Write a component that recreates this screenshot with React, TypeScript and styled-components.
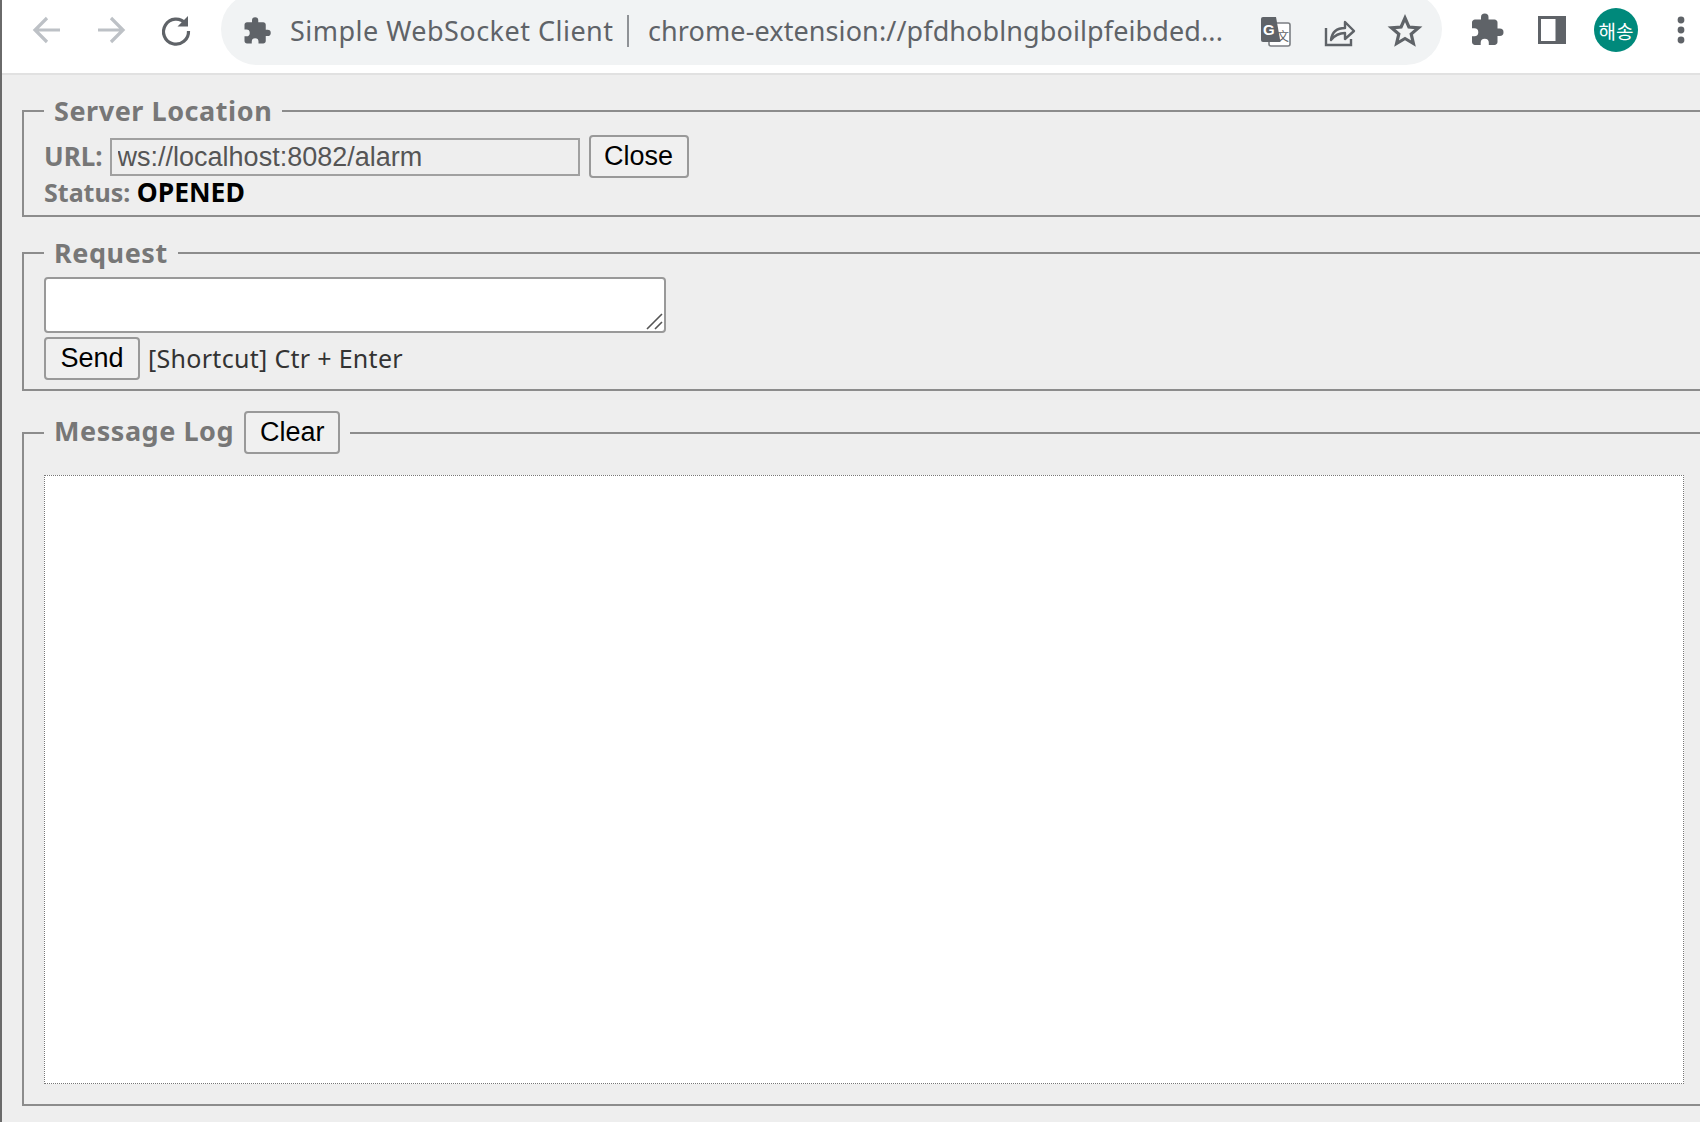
import React from "react";
import styled, { createGlobalStyle } from "styled-components";

const Global = createGlobalStyle`
  html, body { margin: 0; padding: 0; height: 100%; overflow: hidden; background: #eeeeee; }
`;

const Shell = styled.div`
  width: 1700px;
  height: 1122px;
  box-sizing: border-box;
  border-left: 2px solid #6a6a6a;
  overflow: hidden;
  display: flex;
  flex-direction: column;
  background: #eeeeee;
`;

const Toolbar = styled.header`
  height: 75px;
  flex: none;
  box-sizing: border-box;
  background: #fff;
  border-bottom: 2px solid #e1e1e1;
  display: flex;
  align-items: flex-start;
`;

const NavGroup = styled.div`
  width: 219px;
  height: 60px;
  flex: none;
  display: flex;
  align-items: center;
  padding-left: 27px;
  box-sizing: border-box;
  gap: 28px;
`;

const Icon = styled.svg`
  width: 36px;
  height: 36px;
  flex: none;
  display: block;
`;

const ReloadIcon = styled(Icon)`
  margin-left: 1px;
`;

const Omnibox = styled.div`
  width: 1221px;
  height: 72px;
  margin-top: -7px;
  padding-top: 3px;
  flex: none;
  box-sizing: border-box;
  background: #f1f3f4;
  border-radius: 36px;
  display: flex;
  align-items: center;
  padding-left: 21px;
  color: #5f6368;
  font-family: "Noto Sans", sans-serif;
  font-size: 27px;
`;

const Title = styled.span`
  margin-left: 18px;
  width: 323px;
  letter-spacing: 0.48px;
  white-space: nowrap;
  flex: none;
`;

const Sep = styled.span`
  width: 2px;
  height: 32px;
  margin-left: 14px;
  background: #8f9296;
  flex: none;
`;

const Url = styled.span`
  margin-left: 19px;
  width: 590px;
  letter-spacing: 0.1px;
  white-space: nowrap;
  flex: none;
`;

const BoxActions = styled.div`
  display: flex;
  gap: 29px;
  margin-left: 19px;
  flex: none;
`;

const RightActions = styled.div`
  height: 60px;
  display: flex;
  align-items: center;
  margin-left: 27px;
  gap: 29px;
`;

const Avatar = styled.div`
  width: 44px;
  height: 44px;
  margin: 0 -4px 0 -5px;
  flex: none;
  border-radius: 50%;
  background: #00897b;
  color: #fff;
  font-family: "Noto Sans CJK KR", sans-serif;
  font-size: 19px;
  display: flex;
  align-items: center;
  justify-content: center;
`;

const Content = styled.main`
  flex: 1;
  min-height: 0;
  padding: 18px 0 0 20px;
  display: flex;
  flex-direction: column;
`;

const Group = styled.fieldset<{ $h: number; $gap?: number }>`
  width: 1684px;
  height: ${(p) => p.$h}px;
  flex: none;
  box-sizing: border-box;
  margin: ${(p) => p.$gap ?? 0}px 0 0;
  padding: 0 20px;
  border: 2px solid #8c8c8c;
  min-inline-size: 0;
`;

const Legend = styled.legend`
  padding: 0 10px;
  font-family: "Noto Sans", sans-serif;
  font-weight: 700;
  font-size: 27px;
  line-height: 36px;
  letter-spacing: 0.55px;
  color: #777;
  display: flex;
  align-items: center;
  gap: 10px;
`;

const LogTitle = styled.span`
  margin-top: -3px;
`;

const Row = styled.div<{ $top?: number }>`
  display: flex;
  align-items: center;
  margin-top: ${(p) => p.$top ?? 0}px;
`;

const Label = styled.label`
  font-family: "Noto Sans", sans-serif;
  font-weight: 700;
  font-size: 25px;
  line-height: 34px;
  color: #777;
`;

const UrlLabel = styled(Label)`
  font-size: 26px;
  margin-top: -1px;
`;

const StatusLine = styled.div`
  margin-top: -3px;
`;

const StatusValue = styled.span`
  color: #000;
  font-size: 26.5px;
`;

const UrlInput = styled.input`
  width: 470px;
  height: 38px;
  box-sizing: border-box;
  margin: 1px 9px 0 7px;
  padding: 0 6px;
  border: 2px solid #a0a0a0;
  background: #eeeeee;
  color: #555;
  font-family: "Liberation Sans", sans-serif;
  font-size: 27px;
`;

const Btn = styled.button<{ $w: number }>`
  height: 43px;
  box-sizing: border-box;
  padding: 0;
  border: 2px solid #999;
  border-radius: 4px;
  background: #f0f0f0;
  color: #000;
  font-family: "Liberation Sans", sans-serif;
  font-size: 27px;
  flex: none;
  width: ${(p) => p.$w}px;
`;

const AreaWrap = styled.div`
  position: relative;
  width: 622px;
  height: 56px;
  margin-top: 6px;
`;

const Area = styled.textarea`
  display: block;
  width: 100%;
  height: 100%;
  box-sizing: border-box;
  margin: 0;
  border: 2px solid #999;
  border-radius: 4px;
  background: #fff;
  resize: none;
  outline: none;
`;

const Grip = styled.svg`
  position: absolute;
  right: 3px;
  bottom: 3px;
  width: 18px;
  height: 18px;
`;

const Hint = styled.span`
  margin: -1px 0 0 8px;
  font-family: "Noto Sans", sans-serif;
  font-size: 25px;
  letter-spacing: 0.3px;
  color: #333;
`;

const Log = styled.div`
  width: 1640px;
  height: 609px;
  margin-top: 21px;
  box-sizing: border-box;
  border: 1px dotted #777;
  background: #fff;
`;

const Back = ({ flip }: { flip?: boolean }) => (
  <Icon viewBox="0 0 36 36" fill="none" stroke="#bdc1c6" strokeWidth="3.2">
    <g transform={flip ? "translate(36 0) scale(-1 1)" : undefined}>
      <path d="M31 18H7M18 6 6 18l12 12" />
    </g>
  </Icon>
);

const Puzzle = ({ $small }: { $small?: boolean }) => (
  <Icon viewBox="0 0 24 24" fill="#5f6368" style={$small ? { width: 30, height: 30 } : undefined}>
    <path d="M20.5 11H19V7c0-1.1-.9-2-2-2h-4V3.5a2.5 2.5 0 0 0-5 0V5H4c-1.1 0-2 .9-2 2v3.8h1.5a2.7 2.7 0 0 1 0 5.4H2V20c0 1.1.9 2 2 2h3.8v-1.5a2.7 2.7 0 0 1 5.4 0V22H17c1.1 0 2-.9 2-2v-4h1.5a2.5 2.5 0 0 0 0-5z" />
  </Icon>
);

export default function App() {
  return (
    <Shell>
      <Global />
      <Toolbar>
        <NavGroup>
          <Back />
          <Back flip />
          <ReloadIcon viewBox="0 0 36 36" fill="none" stroke="#5f6368" strokeWidth="3.2">
            <path d="M27.5 11.5A12.5 12.5 0 1 0 30.5 19" />
            <path d="M30 4v10.5H19.5z" fill="#5f6368" stroke="none" />
          </ReloadIcon>
        </NavGroup>
        <Omnibox>
          <Puzzle $small />
          <Title>Simple WebSocket Client</Title>
          <Sep />
          <Url>chrome-extension://pfdhoblngboilpfeibded...</Url>
          <BoxActions>
            <Icon viewBox="0 0 36 36">
              <rect x="12" y="10" width="21" height="23" rx="2" fill="#fff" stroke="#7b7e82" strokeWidth="1.6" />
              <path d="M4 6a2 2 0 0 1 2-2h13l4.5 25H6a2 2 0 0 1-2-2z" fill="#5f6368" />
              <text x="6" y="22" fontFamily="Liberation Sans, sans-serif" fontWeight="700" fontSize="15" fill="#fff">G</text>
              <text x="20" y="28" fontFamily="Noto Sans CJK SC, sans-serif" fontSize="12" fill="#5f6368">文</text>
            </Icon>
            <Icon viewBox="0 0 36 36" fill="none" stroke="#5f6368" strokeWidth="2.4">
              <path d="M4 15v17h25v-6" />
              <path d="M9 27c1-8 6-12 14-12V9l9 9-9 8v-6c-6 0-10 2-14 7z" strokeLinejoin="round" />
            </Icon>
            <Icon viewBox="0 0 36 36" fill="none" stroke="#5f6368" strokeWidth="3.2">
              <path d="m18 5 3.9 9 9.6.8-7.3 6.3 2.2 9.4L18 25.5l-8.4 5 2.2-9.4-7.3-6.3 9.6-.8z" />
            </Icon>
          </BoxActions>
        </Omnibox>
        <RightActions>
          <Puzzle />
          <Icon viewBox="0 0 36 36">
            <path d="M4 4h28v28H4z" fill="#5f6368" />
            <path d="M7 7h14.5v22H7z" fill="#fff" />
          </Icon>
          <Avatar>해송</Avatar>
          <Icon viewBox="0 0 36 36" fill="#5f6368">
            <circle cx="18" cy="8" r="3.4" />
            <circle cx="18" cy="18" r="3.4" />
            <circle cx="18" cy="28" r="3.4" />
          </Icon>
        </RightActions>
      </Toolbar>
      <Content>
        <Group $h={124}>
          <Legend>Server Location</Legend>
          <Row $top={6}>
            <UrlLabel>URL:</UrlLabel>
            <UrlInput readOnly value="ws://localhost:8082/alarm" />
            <Btn $w={100}>Close</Btn>
          </Row>
          <StatusLine>
            <Label>
              Status: <StatusValue>OPENED</StatusValue>
            </Label>
          </StatusLine>
        </Group>
        <Group $h={156} $gap={18}>
          <Legend>Request</Legend>
          <AreaWrap>
            <Area />
            <Grip viewBox="0 0 18 18" stroke="#555" strokeWidth="1.6">
              <path d="M2 17 17 2M10 17l7-7" />
            </Grip>
          </AreaWrap>
          <Row $top={4}>
            <Btn $w={96}>Send</Btn>
            <Hint>[Shortcut] Ctr + Enter</Hint>
          </Row>
        </Group>
        <Group $h={695} $gap={20}>
          <Legend>
            <LogTitle>Message Log</LogTitle>
            <Btn $w={96}>Clear</Btn>
          </Legend>
          <Log />
        </Group>
      </Content>
    </Shell>
  );
}
